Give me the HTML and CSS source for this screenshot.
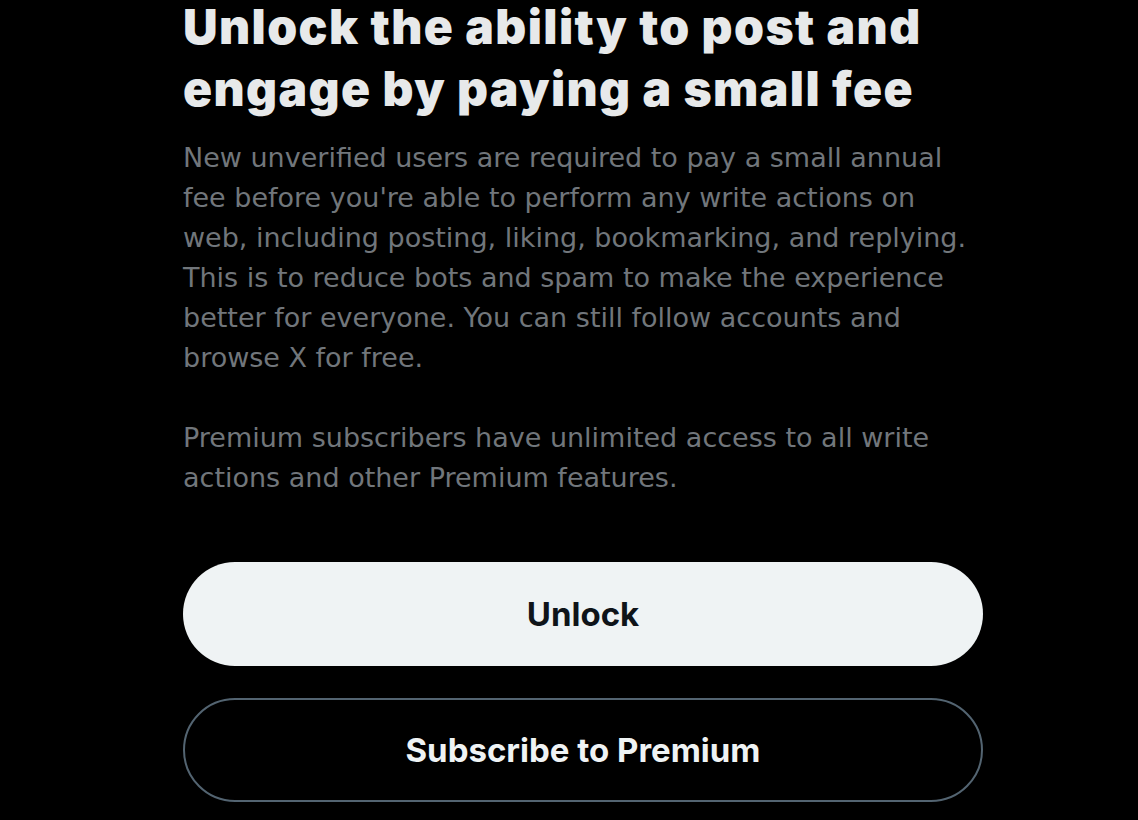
FILE: index.html
```html
<!DOCTYPE html>
<html lang="en">
<head>
    <meta charset="UTF-8">
    <meta name="viewport" content="width=device-width, initial-scale=1.0">
    <title>Unlock posting</title>
    <link rel="stylesheet" href="styles.css">
</head>
<body>
    <div class="container">
        <h1>Unlock the ability to post and engage by paying a small fee</h1>
        <p class="desc">New unverified users are required to pay a small annual fee before you're able to perform any write actions on web, including posting, liking, bookmarking, and replying. This is to reduce bots and spam to make the experience better for everyone. You can still follow accounts and browse X for free.</p>
        <p class="desc">Premium subscribers have unlimited access to all write actions and other Premium features.</p>

        <div class="actions">
            <button class="btn btn-primary">Unlock</button>
            <button class="btn btn-outline">Subscribe to Premium</button>
        </div>
    </div>
</body>
</html>
```

FILE: styles.css
```css
body {
    margin: 0;
    background-color: #000000;
    font-family: Inter, 'Noto Sans', sans-serif;
    overflow: hidden;
}
.container {
    width: 800px;
    margin-left: 183px;
    margin-top: -4px;
}
h1 {
    font-size: 48px;
    line-height: 62px;
    font-weight: 900;
    letter-spacing: 1.4px;
    color: #e7e9ea;
    margin: 0 0 18px;
}
.desc {
    font-family: 'DejaVu Sans', sans-serif;
    font-size: 27px;
    line-height: 40px;
    color: #71767b;
    margin: 0 0 40px;
}
.actions {
    display: flex;
    flex-direction: column;
    gap: 32px;
    margin-top: 64px;
}
.btn {
    height: 104px;
    width: 100%;
    border-radius: 52px;
    font-family: Inter, 'Noto Sans', sans-serif;
    font-size: 33px;
    font-weight: 700;
    cursor: pointer;
}
.btn-primary {
    background-color: #eff3f4;
    color: #0f1419;
    border: none;
}
.btn-outline {
    background-color: transparent;
    color: #eff3f4;
    border: 2px solid #536471;
}
```
